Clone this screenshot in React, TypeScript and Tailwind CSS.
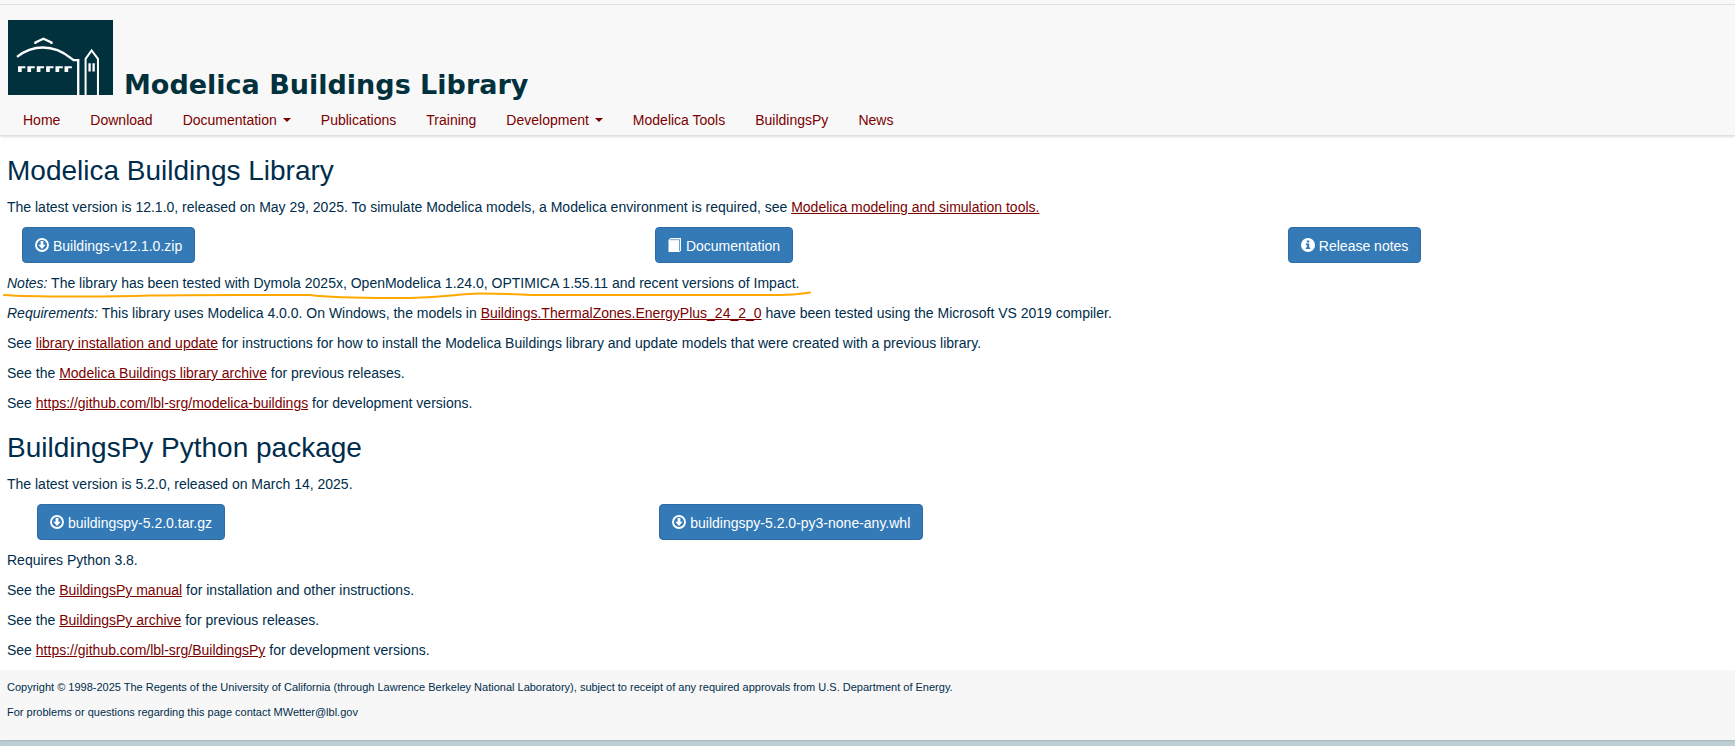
import type { ReactNode } from "react";

type NavItem = { label: string; dropdown?: boolean };

const navItems: NavItem[] = [
  { label: "Home" },
  { label: "Download" },
  { label: "Documentation", dropdown: true },
  { label: "Publications" },
  { label: "Training" },
  { label: "Development", dropdown: true },
  { label: "Modelica Tools" },
  { label: "BuildingsPy" },
  { label: "News" },
];

function Logo() {
  return (
    <svg viewBox="0 0 314 224" className="h-[75px] w-[105px]" fill="none" stroke="#fff" aria-hidden="true">
      <path d="M0 0h314v224H0z" fill="#00313c" stroke="none" />
      <path d="M82 72v-5l24-11 24 11v5" strokeWidth="7" />
      <path d="M27 110C72 74 135 70 188 114l8 6h14v104" strokeWidth="7" />
      <path d="M232 224V116l18-25 19 25v108" strokeWidth="6" />
      <path d="M244 129v25M256 129v25" strokeWidth="7" />
      <path
        d="M30 138h22v6H41v11H30zM58 138h22v6H69v11H58zM86 138h22v6H97v11H86zM114 138h22v6h-11v11h-11zM142 138h22v6h-11v11h-11zM169 138h22v6h-11v11h-11z"
        fill="#fff"
        stroke="none"
      />
    </svg>
  );
}

function DownloadIcon() {
  return (
    <svg viewBox="0 0 14 14" className="size-3.5" aria-hidden="true">
      <circle cx="7" cy="7" r="6" fill="none" stroke="currentColor" strokeWidth="1.9" />
      <path d="M5.6 3h2.8v3.8h2.3L7 11 3.300 6.800h2.300z" fill="currentColor" />
    </svg>
  );
}

function BookIcon() {
  return (
    <svg viewBox="0 0 14 14" className="size-3.5" aria-hidden="true">
      <path d="M2.500 0H13v12.500l-1.500 1.500H.5V2z" fill="currentColor" />
      <path d="M2 1.700H11.500V13" fill="none" stroke="#337ab7" strokeWidth=".7" />
    </svg>
  );
}

function InfoIcon() {
  return (
    <svg viewBox="0 0 14 14" className="size-3.5" aria-hidden="true">
      <circle cx="7" cy="7" r="7" fill="currentColor" />
      <path d="M5.8 2.5h2.4v2H5.8zM4.8 5.5h3.4v4h1v1.4H4.8V9.5h1V7h-1z" fill="#337ab7" />
    </svg>
  );
}

function ButtonLink({ icon, children }: { icon: ReactNode; children: ReactNode }) {
  return (
    <a
      href="#"
      className="inline-flex h-9 items-center gap-1 rounded border border-[#2e6da4] bg-[#337ab7] px-3 text-white"
    >
      {icon}
      <span className="pt-0.5">{children}</span>
    </a>
  );
}

function TextLink({ children }: { children: ReactNode }) {
  return (
    <a href="#" className="text-[#7b0000] underline">
      {children}
    </a>
  );
}

export default function App() {
  return (
    <div className="bg-[#bfd0d5] pb-1.5 font-['Liberation_Sans',Arial,sans-serif] text-sm leading-5 text-[#002d4b]">
      <div className="bg-white shadow">
        <header className="border-b border-[#e2e2e2] bg-[#f8f8f8] shadow-sm">
          <div className="h-[5px] border-b border-[#e2e2e2]" />
          <a href="#" className="flex items-end gap-[11px] px-2 pt-[15px]">
            <Logo />
            <span className="font-['DejaVu_Sans',sans-serif] text-[27px] leading-5 font-bold text-[#00313c]">
              Modelica Buildings Library
            </span>
          </a>
          <nav className="flex h-10 items-center gap-[30px] px-[23px] pt-2.5 text-[#7b0000]">
            {navItems.map((item) => (
              <a key={item.label} href="#" className="flex items-center gap-1.5">
                {item.label}
                {item.dropdown && (
                  <span className="border-x-4 border-t-4 border-x-transparent border-t-[#7b0000]" />
                )}
              </a>
            ))}
          </nav>
        </header>

        <main className="space-y-2.5 px-[7px] pb-2.5">
          <h2 className="pt-5 pb-0.5 text-[28px] leading-[29px]">Modelica Buildings Library</h2>
          <p>
            The latest version is 12.1.0, released on May 29, 2025. To simulate Modelica models, a Modelica
            environment is required, see <TextLink>Modelica modeling and simulation tools.</TextLink>
          </p>
          <div className="flex pl-[15px]">
            <div className="w-[37.1%]">
              <ButtonLink icon={<DownloadIcon />}>Buildings-v12.1.0.zip</ButtonLink>
            </div>
            <div className="w-[37.1%]">
              <ButtonLink icon={<BookIcon />}>Documentation</ButtonLink>
            </div>
            <div>
              <ButtonLink icon={<InfoIcon />}>Release notes</ButtonLink>
            </div>
          </div>
          <p className="relative">
            <em>Notes:</em> The library has been tested with Dymola 2025x, OpenModelica 1.24.0, OPTIMICA 1.55.11
            and recent versions of Impact.
            {/* hand-drawn highlight under the tested versions */}
            <svg
              viewBox="0 0 812 10"
              className="pointer-events-none absolute -left-[7px] top-[18px] h-2.5 w-[812px]"
              fill="none"
              stroke="#ffa800"
              strokeWidth="2"
              strokeLinecap="round"
              aria-hidden="true"
            >
              <path d="M4 4C30 6 110 6 150 4.500C200 3.500 260 4 310 4C335 7.500 370 7 410 7C450 6.500 455 3 480 2.500C520 2.500 520 4 540 4H780C795 4 800 3 810 1.500" />
            </svg>
          </p>
          <p>
            <em>Requirements:</em> This library uses Modelica 4.0.0. On Windows, the models in{" "}
            <TextLink>Buildings.ThermalZones.EnergyPlus_24_2_0</TextLink> have been tested using the Microsoft VS
            2019 compiler.
          </p>
          <p>
            See <TextLink>library installation and update</TextLink> for instructions for how to install the
            Modelica Buildings library and update models that were created with a previous library.
          </p>
          <p>
            See the <TextLink>Modelica Buildings library archive</TextLink> for previous releases.
          </p>
          <p>
            See <TextLink>https://github.com/lbl-srg/modelica-buildings</TextLink> for development versions.
          </p>

          <h2 className="pt-2.5 pb-0.5 text-[28px] leading-[29px]">BuildingsPy Python package</h2>
          <p>The latest version is 5.2.0, released on March 14, 2025.</p>
          <div className="flex pl-[30px]">
            <div className="w-[36.8%]">
              <ButtonLink icon={<DownloadIcon />}>buildingspy-5.2.0.tar.gz</ButtonLink>
            </div>
            <div>
              <ButtonLink icon={<DownloadIcon />}>buildingspy-5.2.0-py3-none-any.whl</ButtonLink>
            </div>
          </div>
          <p>Requires Python 3.8.</p>
          <p>
            See the <TextLink>BuildingsPy manual</TextLink> for installation and other instructions.
          </p>
          <p>
            See the <TextLink>BuildingsPy archive</TextLink> for previous releases.
          </p>
          <p>
            See <TextLink>https://github.com/lbl-srg/BuildingsPy</TextLink> for development versions.
          </p>
        </main>

        <footer className="space-y-2.5 bg-[#f7f7f7] px-[7px] pt-2.5 pb-5 text-[11px] leading-[15px]">
          <p>
            Copyright © 1998-2025 The Regents of the University of California (through Lawrence Berkeley National
            Laboratory), subject to receipt of any required approvals from U.S. Department of Energy.
          </p>
          <p>For problems or questions regarding this page contact MWetter@lbl.gov</p>
        </footer>
      </div>
    </div>
  );
}
